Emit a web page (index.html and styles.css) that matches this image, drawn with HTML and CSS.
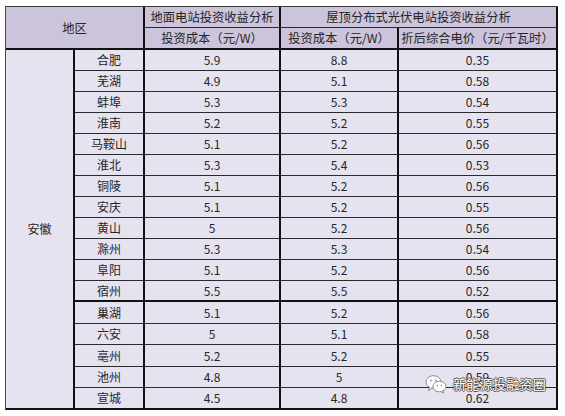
FILE: index.html
```html
<!DOCTYPE html>
<html lang="zh">
<head>
<meta charset="utf-8">
<link rel="stylesheet" href="styles.css">
</head>
<body>
<div class="page">
<table class="grid">
  <colgroup>
    <col class="c1"><col class="c2"><col class="c3"><col class="c4"><col class="c5">
  </colgroup>
  <thead>
    <tr class="h1">
      <th class="hd" rowspan="2" colspan="2">地区</th>
      <th class="hd">地面电站投资收益分析</th>
      <th class="hd last" colspan="2">屋顶分布式光伏电站投资收益分析</th>
    </tr>
    <tr class="h2">
      <th class="hd sub">投资成本（元/W）</th>
      <th class="hd sub">投资成本（元/W）</th>
      <th class="hd sub last">折后综合电价（元/千瓦时）</th>
    </tr>
  </thead>
  <tbody>
    <tr><td class="prov" rowspan="17">安徽</td><td>合肥</td><td>5.9</td><td>8.8</td><td class="last">0.35</td></tr>
    <tr><td>芜湖</td><td>4.9</td><td>5.1</td><td class="last">0.58</td></tr>
    <tr><td>蚌埠</td><td>5.3</td><td>5.3</td><td class="last">0.54</td></tr>
    <tr><td>淮南</td><td>5.2</td><td>5.2</td><td class="last">0.55</td></tr>
    <tr><td>马鞍山</td><td>5.1</td><td>5.2</td><td class="last">0.56</td></tr>
    <tr><td>淮北</td><td>5.3</td><td>5.4</td><td class="last">0.53</td></tr>
    <tr><td>铜陵</td><td>5.1</td><td>5.2</td><td class="last">0.56</td></tr>
    <tr><td>安庆</td><td>5.1</td><td>5.2</td><td class="last">0.55</td></tr>
    <tr><td>黄山</td><td>5</td><td>5.2</td><td class="last">0.56</td></tr>
    <tr><td>滁州</td><td>5.3</td><td>5.3</td><td class="last">0.54</td></tr>
    <tr><td>阜阳</td><td>5.1</td><td>5.2</td><td class="last">0.56</td></tr>
    <tr class="sep"><td>宿州</td><td>5.5</td><td>5.5</td><td class="last">0.52</td></tr>
    <tr class="tall"><td>巢湖</td><td>5.1</td><td>5.2</td><td class="last">0.56</td></tr>
    <tr><td>六安</td><td>5</td><td>5.1</td><td class="last">0.58</td></tr>
    <tr class="tall"><td>亳州</td><td>5.2</td><td>5.2</td><td class="last">0.55</td></tr>
    <tr><td>池州</td><td>4.8</td><td>5</td><td class="last">0.59</td></tr>
    <tr class="tall end"><td>宣城</td><td>4.5</td><td>4.8</td><td class="last">0.62</td></tr>
  </tbody>
</table>
<div class="mark">
  <svg class="wx" width="22" height="20" viewBox="0 0 22 20">
    <ellipse cx="8.5" cy="8" rx="7.5" ry="6.3" fill="#fff" stroke="#8a8a8a" stroke-width="1"/>
    <path d="M4.5 13 L3.5 16.5 L7.5 14" fill="#fff" stroke="#8a8a8a" stroke-width="1"/>
    <ellipse cx="14.5" cy="12.5" rx="6.5" ry="5.3" fill="#fff" stroke="#8a8a8a" stroke-width="1"/>
    <path d="M17.5 16.5 L18.8 19 L15.5 17.4" fill="#fff" stroke="#8a8a8a" stroke-width="1"/>
    <circle cx="6" cy="6.5" r="0.9" fill="#8a8a8a"/>
    <circle cx="11" cy="6.5" r="0.9" fill="#8a8a8a"/>
    <circle cx="12.3" cy="11.5" r="0.8" fill="#8a8a8a"/>
    <circle cx="16.6" cy="11.5" r="0.8" fill="#8a8a8a"/>
  </svg>
  <span class="mark-text">新能源投融资圈</span>
</div>
</div>
</body>
</html>
```

FILE: styles.css
```css
html, body {
  margin: 0;
  padding: 0;
  background: #ffffff;
}
.page {
  position: relative;
  width: 565px;
  height: 416px;
  padding: 6px 0 0 5px;
  box-sizing: border-box;
  font-family: "Noto Sans CJK SC", "Noto Sans", sans-serif;
  color: #262626;
}
.grid {
  border-collapse: separate;
  border-spacing: 0;
  table-layout: fixed;
  width: 553px;
  border-top: 1px solid #3a3a3a;
  border-left: 1px solid #4a4a4a;
}
.c1 { width: 69px; }
.c2 { width: 70px; }
.c3 { width: 136px; }
.c4 { width: 118px; }
.c5 { width: 159px; }

.grid th, .grid td {
  padding: 0;
  text-align: center;
  vertical-align: middle;
  font-weight: normal;
  font-size: 12px;
  line-height: 14px;
  white-space: nowrap;
  overflow: hidden;
  box-sizing: border-box;
  border-right: 2px solid #111;
  border-bottom: 1px solid #2a2a2a;
}
.grid th {
  background: #cbc4db;
  font-size: 12.3px;
}
.h1 { height: 21px; }
.h2 { height: 22px; }
.h2 th { border-bottom: 2px solid #111; }
.grid th[rowspan] { border-bottom: 2px solid #111; }
.grid td {
  background: #e5e3ef;
}
.grid tbody tr { height: 21px; }
.grid tbody tr.tall { height: 22px; }
.grid tr.sep td { border-bottom: 2px solid #111; }
.grid tr.end td { border-bottom: 2px solid #111; }
.grid td.prov { border-bottom: 2px solid #111; }
.grid .last { border-right: 2px solid #111; }

.mark {
  position: absolute;
  left: 425px;
  top: 374px;
  display: flex;
  align-items: center;
  gap: 6px;
}
.wx { display: block; }
.mark-text {
  font-size: 13px;
  line-height: 16px;
  color: #ffffff;
  letter-spacing: 0.3px;
  text-shadow: -1px 0 #555, 1px 0 #555, 0 -1px #555, 0 1px #555;
}
```
